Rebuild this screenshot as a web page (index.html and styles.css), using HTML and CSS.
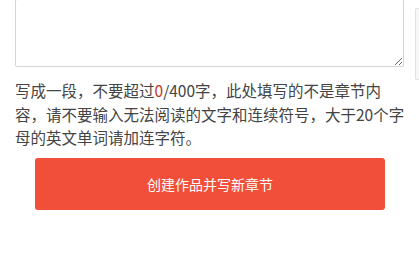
FILE: index.html
```html
<!DOCTYPE html>
<html lang="zh-CN">
<head>
  <meta charset="UTF-8">
  <meta name="viewport" content="width=device-width, initial-scale=1.0">
  <title>创建作品</title>
  <link rel="stylesheet" href="styles.css">
</head>
<body>
  <div class="container">
    <textarea class="intro"></textarea>
    <p class="hint">写成一段，不要超过<span class="count">0</span>/400字，此处填写的不是章节内容，请不要输入无法阅读的文字和连续符号，大于20个字母的英文单词请加连字符。</p>
    <a class="create-button" href="#">创建作品并写新章节</a>
  </div>
  <div class="scrollbar"></div>
</body>
</html>
```

FILE: styles.css
```css
html, body {
  margin: 0;
  padding: 0;
  background-color: #fff;
  overflow: hidden;
}

body {
  font-family: "Noto Sans CJK SC", "Noto Sans", sans-serif;
  color: #444;
}

.container {
  padding: 0 15px 0 15px;
}

.intro {
  display: block;
  box-sizing: border-box;
  width: 389px;
  height: 68px;
  margin-top: -1px;
  border: 1px solid #d4d4d4;
  border-radius: 2px;
  background-color: #fff;
}

.hint {
  margin: 12px -6px 0 0;
  font-size: 15.5px;
  line-height: 23.5px;
}

.count {
  color: #c0392b;
}

.create-button {
  display: block;
  margin: 8px 19px 0 20px;
  height: 52px;
  line-height: 52px;
  border-radius: 3px;
  background-color: #f14f39;
  color: #fff;
  text-align: center;
  text-decoration: none;
  font-size: 14px;
}

.scrollbar {
  position: absolute;
  top: 8px;
  left: 415px;
  width: 4px;
  height: 72px;
  box-sizing: border-box;
  border: 1px solid #e2e2e2;
  border-right: none;
  border-radius: 2px 0 0 2px;
  background-color: #f7f7f7;
}
```
